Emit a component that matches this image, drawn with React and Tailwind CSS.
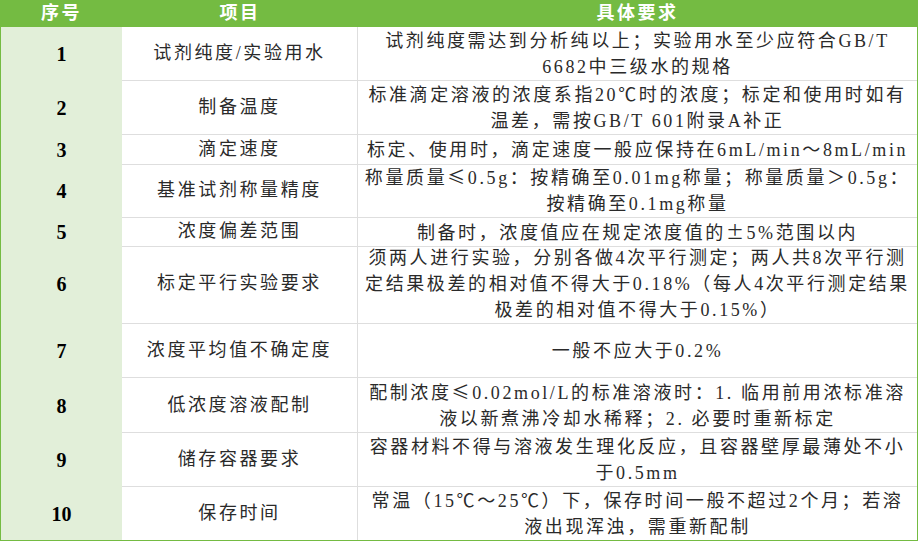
import React from 'react'

const rows = [
  { n: '1', item: '试剂纯度/实验用水', h: 'h-[54px]', lines: ['试剂纯度需达到分析纯以上；实验用水至少应符合GB/T', '6682中三级水的规格'] },
  { n: '2', item: '制备温度', h: 'h-[54px]', lines: ['标准滴定溶液的浓度系指20℃时的浓度；标定和使用时如有', '温差，需按GB/T 601附录A补正'] },
  { n: '3', item: '滴定速度', h: 'h-[28px]', lines: ['标定、使用时，滴定速度一般应保持在6mL/min～8mL/min'] },
  { n: '4', item: '基准试剂称量精度', h: 'h-[54px]', lines: ['称量质量≤0.5g：按精确至0.01mg称量；称量质量＞0.5g：', '按精确至0.1mg称量'] },
  { n: '5', item: '浓度偏差范围', h: 'h-[27px]', lines: ['制备时，浓度值应在规定浓度值的±5%范围以内'] },
  { n: '6', item: '标定平行实验要求', h: 'h-[80px]', lines: ['须两人进行实验，分别各做4次平行测定；两人共8次平行测', '定结果极差的相对值不得大于0.18%（每人4次平行测定结果', '极差的相对值不得大于0.15%）'] },
  { n: '7', item: '浓度平均值不确定度', h: 'h-[54px]', lines: ['一般不应大于0.2%'] },
  { n: '8', item: '低浓度溶液配制', h: 'h-[55px]', lines: ['配制浓度≤0.02mol/L的标准溶液时：1. 临用前用浓标准溶', '液以新煮沸冷却水稀释；2. 必要时重新标定'] },
  { n: '9', item: '储存容器要求', h: 'h-[54px]', lines: ['容器材料不得与溶液发生理化反应，且容器壁厚最薄处不小', '于0.5mm'] },
  { n: '10', item: '保存时间', h: 'h-[53px]', lines: ['常温（15℃～25℃）下，保存时间一般不超过2个月；若溶', '液出现浑浊，需重新配制'] },
]

const font = { fontFamily: '"Liberation Serif", "Noto Sans CJK SC", serif' }

// ≤ 和 ± 用全角字体显示
function Line({ text }) {
  const parts = text.split(/([≤±])/)
  return (
    <div>
      {parts.map((p, i) =>
        p === '≤' || p === '±' ? (
          <span key={i} className="font-['Noto_Sans_CJK_SC']">{p}</span>
        ) : (
          p
        )
      )}
    </div>
  )
}

export default function App() {
  return (
    <div className="w-[918px] h-[541px] bg-white overflow-hidden" style={font}>
      <div className="border-x border-b border-[#74bb42]">
        {/* 表头 */}
        <div className="grid grid-cols-[121px_236px_559px] h-[27px] bg-[#74bb42] text-white text-[18px] font-semibold tracking-[2.5px]">
          <div className="flex items-center justify-center">序号</div>
          <div className="flex items-center justify-center">项目</div>
          <div className="flex items-center justify-center">具体要求</div>
        </div>

        {rows.map((r, i) => {
          const last = i === rows.length - 1
          const line = last ? '' : 'border-b border-[#dedede]'
          return (
            <div key={r.n} className={`grid grid-cols-[121px_236px_559px] ${r.h}`}>
              <div className="flex items-center justify-center bg-[#e2efd9] text-[20px] font-bold text-black">
                {r.n}
              </div>
              <div className={`flex items-center justify-center border-r border-[#dedede] text-[18px] tracking-[2.6px] text-[#2a2a2a] ${line}`}>
                {r.item}
              </div>
              <div className={`flex flex-col items-center justify-center text-[18px] leading-[26px] tracking-[2.6px] text-[#2a2a2a] whitespace-nowrap ${line}`}>
                {r.lines.map((t) => (
                  <Line key={t} text={t} />
                ))}
              </div>
            </div>
          )
        })}
      </div>
    </div>
  )
}
